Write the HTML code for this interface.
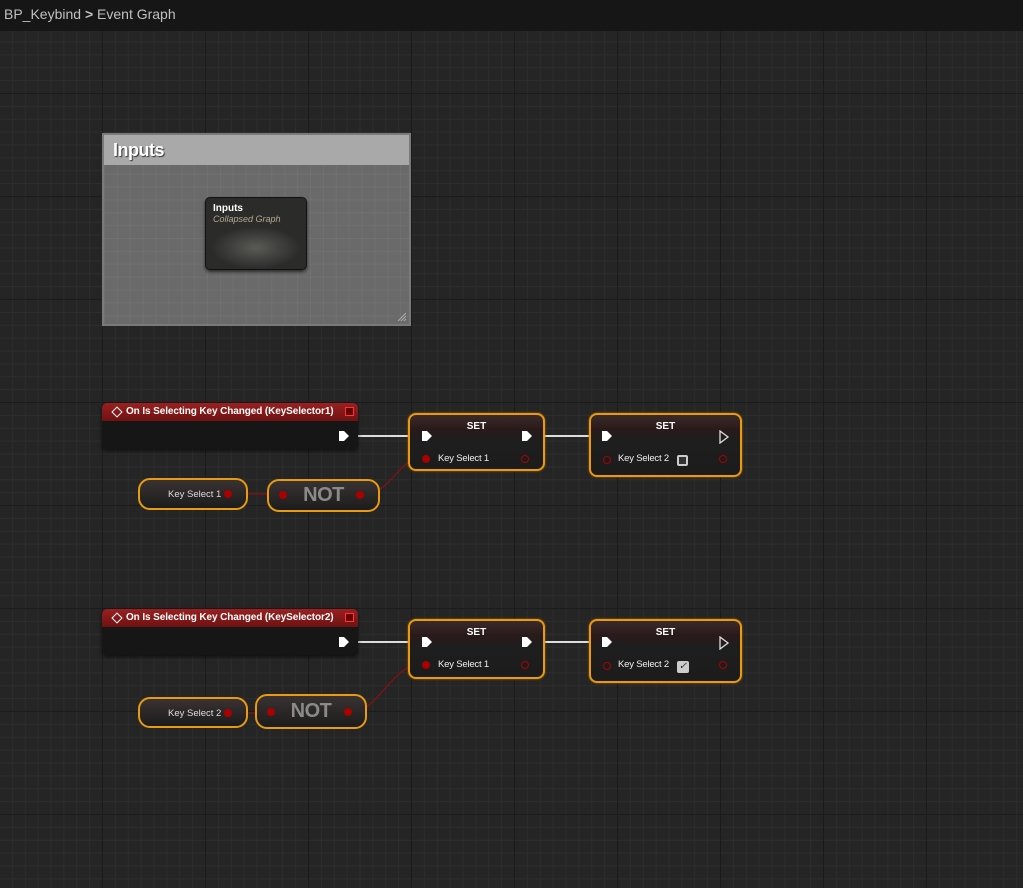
<!DOCTYPE html>
<html><head><meta charset="utf-8"><style>
*{margin:0;padding:0;box-sizing:border-box}
body{width:1023px;height:888px;overflow:hidden;background:#252525;font-family:"Liberation Sans",sans-serif;position:relative}
#grid{position:absolute;left:0;top:0;width:1023px;height:888px;
background-image:
linear-gradient(to right,#1b1b1b 1px,transparent 1px),
linear-gradient(to bottom,#1b1b1b 1px,transparent 1px),
linear-gradient(to right,#2d2d2d 1px,transparent 1px),
linear-gradient(to bottom,#2d2d2d 1px,transparent 1px);
background-size:103px 103px,103px 103px,12.875px 12.875px,12.875px 12.875px;
background-position:-1px -10px,-1px -10px,-1px -10px,-1px -10px}
#top{position:absolute;left:0;top:0;width:1023px;height:31px;background:#161616;color:#c0c0c0;font-size:14px;line-height:29px;padding-left:4px}
.abs{position:absolute}
.cm{left:102px;top:133px;width:309px;height:193px;background:#6a6a6a;border:2px solid #7a7a7a;
background-image:linear-gradient(to right,rgba(255,255,255,.04) 1px,transparent 1px),linear-gradient(to bottom,rgba(255,255,255,.04) 1px,transparent 1px);background-size:12.875px 12.875px}
.cmh{position:absolute;left:0;top:0;right:0;height:30px;background:#a9a9a9;color:#fff;font-weight:bold;font-size:18px;line-height:30px;padding-left:9px;text-shadow:1px 1px 1px #333;letter-spacing:-0.5px}
.inner{left:205px;top:197px;width:102px;height:73px;background:radial-gradient(ellipse 45% 30% at 50% 70%,#5a5a56 0%,#2b2b2a 100%);border:1px solid #111;border-radius:5px;box-shadow:0 2px 3px rgba(0,0,0,.6)}
.ev{background:#161616;border-radius:5px;box-shadow:0 2px 4px rgba(0,0,0,.6)}
.evh{height:18px;background:linear-gradient(#9a2020,#6e1212);border-radius:5px 5px 0 0;color:#fff;font-weight:bold;font-size:10px;letter-spacing:-0.1px;line-height:18px;padding-left:24px;position:relative}
.evh .dia{position:absolute;left:11px;top:5px;width:8px;height:8px;border:1.5px solid #fff;transform:rotate(45deg)}
.evh .sq{position:absolute;right:4px;top:4px;width:9px;height:9px;border:1.5px solid #f33;background:#600}
.set{border:2px solid #e89a10;border-radius:8px;background:linear-gradient(#3b2a2a 0,#2a1a1a 14px,#1e1e1e 26px,#1c1c1c);box-shadow:0 0 2px #a86000}
.set .t{text-align:center;color:#fff;font-weight:bold;font-size:10px;margin-top:6px}
.lbl{color:#eee;font-size:9.5px;position:absolute;letter-spacing:-0.2px}
.pill{border:2px solid #e89a10;border-radius:12px;background:linear-gradient(#3a3232,#1c1c1c);color:#ddd;font-size:9.5px}
.not{color:#8a8a8a;font-weight:bold;font-size:20px;text-align:center;letter-spacing:-0.5px}
.dot{position:absolute;width:8px;height:8px;border-radius:50%;background:#a00}
.ring{position:absolute;width:8px;height:8px;border-radius:50%;border:1.5px solid #a00;background:#1c1c1c}
</style></head><body>
<div id="grid"></div>
<div id="top">BP_Keybind <span style="font-weight:bold">&gt;</span> Event Graph</div>

<div class="abs cm"><div class="cmh">Inputs</div>
<svg class="abs" style="right:2px;bottom:2px" width="10" height="10"><path d="M1 9L9 1M4 9L9 4M7 9L9 7" stroke="#aaa"/></svg></div>
<div class="abs inner"><div style="color:#fff;font-weight:bold;font-size:10px;margin:5px 0 0 7px">Inputs</div><div style="color:#b0aa90;font-style:italic;font-size:9px;margin-left:7px">Collapsed Graph</div></div>

<svg class="abs" style="left:0;top:0" width="1023" height="888">
<g stroke="#ddd" stroke-width="2" fill="none">
<path d="M350 436H420"/><path d="M530 436H602"/>
<path d="M350 642H420"/><path d="M530 642H602"/>
</g>
<g stroke="#8a1010" stroke-width="1.2" fill="none">
<path d="M230 494H282"/><path d="M364 494C392 494 398 457 424 457"/>
<path d="M230 713H270"/><path d="M350 713C378 713 392 663 424 663"/>
</g>
</svg>

<div class="abs ev" style="left:102px;top:403px;width:256px;height:46px"><div class="evh"><i class="dia"></i>On Is Selecting Key Changed (KeySelector1)<i class="sq"></i></div></div>

<div class="abs set" style="left:408px;top:413px;width:137px;height:58px"><div class="t">SET</div><span class="lbl" style="left:28px;top:38px">Key Select 1</span><i class="dot" style="left:12px;top:40px"></i><i class="ring" style="left:111px;top:40px"></i></div>
<div class="abs set" style="left:589px;top:413px;width:153px;height:64px"><div class="t">SET</div><span class="lbl" style="left:27px;top:38px">Key Select 2</span><i class="ring" style="left:12px;top:41px"></i><i class="ring" style="left:128px;top:40px"></i>
<i class="abs" style="left:86px;top:40px;width:11px;height:11px;border:2px solid #ccc;border-radius:2px;background:#333"></i>
<svg class="abs" style="left:128px;top:15px" width="12" height="14"><path d="M1 1L9 7L1 13Z" fill="none" stroke="#ddd" stroke-width="1.3"/></svg></div>

<div class="abs pill" style="left:138px;top:478px;width:110px;height:32px"><span class="abs" style="left:28px;top:9px">Key Select 1</span><i class="dot" style="left:84px;top:10px"></i></div>
<div class="abs pill not" style="left:267px;top:479px;width:113px;height:33px;line-height:29px">NOT<i class="dot" style="left:10px;top:10px"></i><i class="dot" style="left:87px;top:10px"></i></div>

<div class="abs ev" style="left:102px;top:609px;width:256px;height:46px"><div class="evh"><i class="dia"></i>On Is Selecting Key Changed (KeySelector2)<i class="sq"></i></div></div>

<div class="abs set" style="left:408px;top:619px;width:137px;height:60px"><div class="t">SET</div><span class="lbl" style="left:28px;top:38px">Key Select 1</span><i class="dot" style="left:12px;top:40px"></i><i class="ring" style="left:111px;top:40px"></i></div>
<div class="abs set" style="left:589px;top:619px;width:153px;height:64px"><div class="t">SET</div><span class="lbl" style="left:27px;top:38px">Key Select 2</span><i class="ring" style="left:12px;top:41px"></i><i class="ring" style="left:128px;top:40px"></i>
<i class="abs" style="left:86px;top:40px;width:12px;height:12px;border-radius:2px;background:#ccc;color:#333;font-size:10px;line-height:12px;text-align:center">✓</i>
<svg class="abs" style="left:128px;top:15px" width="12" height="14"><path d="M1 1L9 7L1 13Z" fill="none" stroke="#ddd" stroke-width="1.3"/></svg></div>

<div class="abs pill" style="left:138px;top:697px;width:110px;height:31px"><span class="abs" style="left:28px;top:9px">Key Select 2</span><i class="dot" style="left:84px;top:10px"></i></div>
<div class="abs pill not" style="left:255px;top:694px;width:112px;height:35px;line-height:31px">NOT<i class="dot" style="left:10px;top:12px"></i><i class="dot" style="left:87px;top:12px"></i></div>

<svg class="abs" style="left:0;top:0" width="1023" height="888"><g fill="#fff">
<path d="M339 431h5l5 5l-5 5h-5z"/><path d="M422 431h5l5 5l-5 5h-5z"/><path d="M522 431h5l5 5l-5 5h-5z"/><path d="M602 431h5l5 5l-5 5h-5z"/>
<path d="M339 637h5l5 5l-5 5h-5z"/><path d="M422 637h5l5 5l-5 5h-5z"/><path d="M522 637h5l5 5l-5 5h-5z"/><path d="M602 637h5l5 5l-5 5h-5z"/></g></svg>
</body></html>
